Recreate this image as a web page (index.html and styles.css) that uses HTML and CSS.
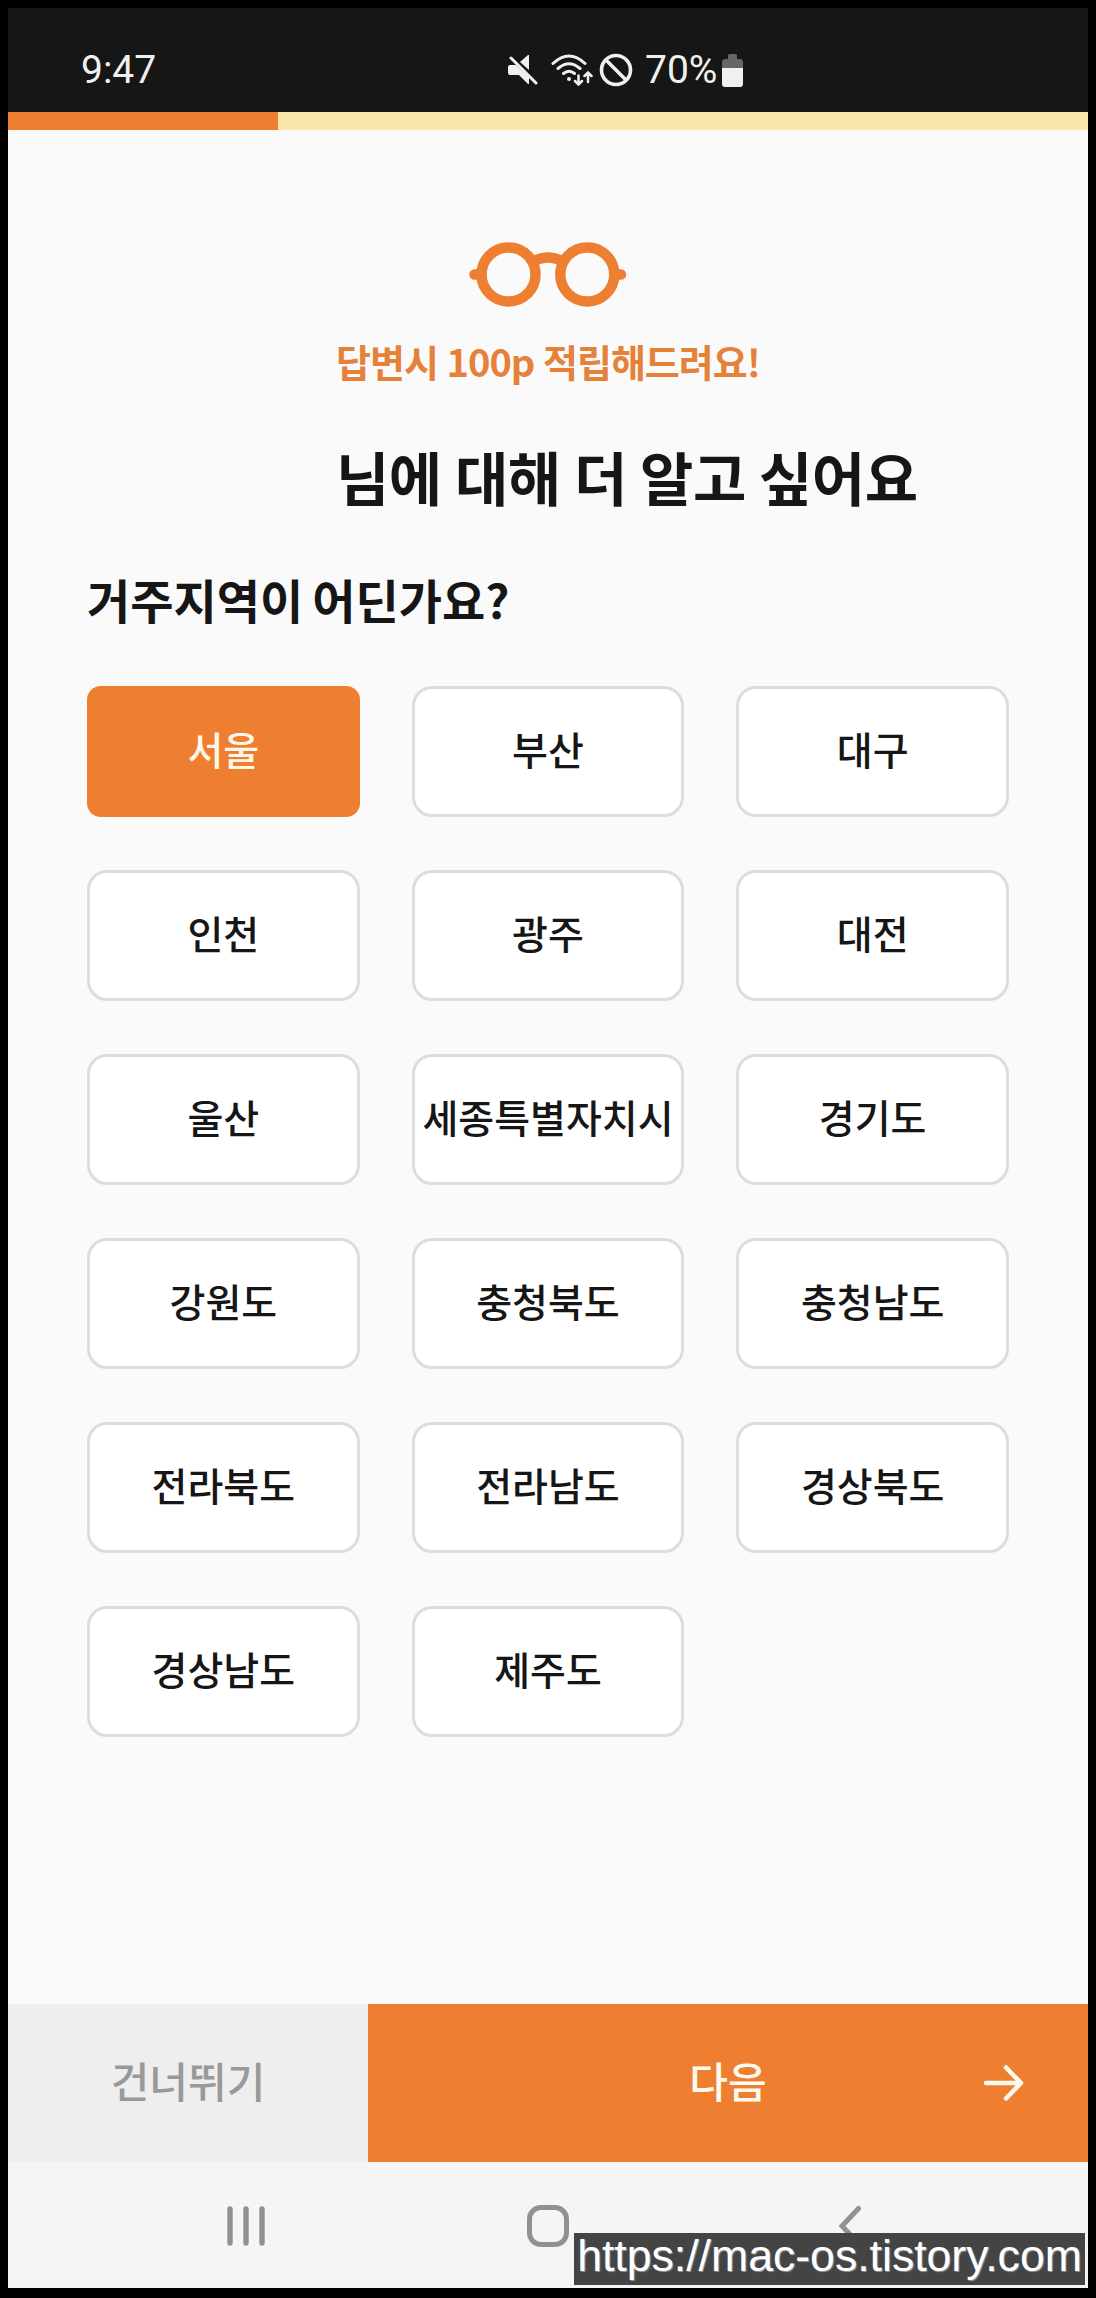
FILE: index.html
```html
<!DOCTYPE html>
<html lang="ko">
<head>
    <meta charset="UTF-8">
    <meta name="viewport" content="width=device-width, initial-scale=1.0">
    <title>거주지역 설문</title>
    <link rel="stylesheet" href="styles.css">
</head>
<body>
    <div class="phone">
        <div class="status-bar">
            <span class="time">9:47</span>
            <div class="status-icons">
                <svg class="icon-mute" width="30" height="30" viewBox="0 0 30 30">
                    <path d="M12 7l8-7h1v15z" fill="#f0f0ee"/>
                    <path d="M3 3l25 25" stroke="#161616" stroke-width="6"/>
                    <path d="M2 10h6l13 12v7h-1l-9-9H2q-2 0-2-2v-6q0-2 2-2z" fill="#f0f0ee"/>
                    <path d="M3 3l25 25" stroke="#f0f0ee" stroke-width="3" stroke-linecap="round"/>
                </svg>
                <svg class="icon-wifi" width="42" height="32" viewBox="0 0 42 32" fill="none" stroke="#f0f0ee" stroke-width="3" stroke-linecap="round">
                    <path d="M2 9.500Q18-5.500 34 9.500M7 14.500q11-9.500 22 0M12.500 19.500q5.500-4.500 11 0"/>
                    <circle cx="18" cy="25" r="2" fill="#f0f0ee" stroke="none"/>
                    <path d="M27.500 21.500v9M24 27l3.500 3.500 3.500-3.500M37 28v-9.500M33.500 22l3.500-3.500 3.500 3.500" stroke-width="2.500"/>
                </svg>
                <svg class="icon-block" width="34" height="34" viewBox="0 0 34 34" fill="none" stroke="#f0f0ee" stroke-width="3.600">
                    <circle cx="17" cy="17" r="14.500"/>
                    <path d="M6.500 6.500l21 21"/>
                </svg>
                <span class="battery-text">70%</span>
                <svg class="icon-battery" width="22" height="34" viewBox="0 0 22 34">
                    <path d="M6 1.500Q6 0 7.500 0h6Q15 0 15 1.500V5h3q3 0 3 3v7H0V8q0-3 3-3h3z" fill="#666"/>
                    <path d="M0 14h21v16q0 3-3 3H3q-3 0-3-3z" fill="#f0f0ee"/>
                </svg>
            </div>
        </div>
        <div class="progress"><div class="progress-fill"></div></div>

        <div class="content">
            <svg class="glasses" width="158" height="66" viewBox="0 0 158 66" fill="none" stroke="#ee7f31" stroke-width="10.500">
                <circle cx="39.500" cy="32.500" r="27"/>
                <circle cx="118.300" cy="32.500" r="27"/>
                <path d="M63 20q16-9 32 0"/>
                <path d="M5.500 32.500h7M145.500 32.500h6.500" stroke-linecap="round"/>
            </svg>
            <p class="reward">답변시 100p 적립해드려요!</p>
            <h1>님에 대해 더 알고 싶어요</h1>
            <h2>거주지역이 어딘가요?</h2>
            <div class="regions">
                <button class="region selected">서울</button>
                <button class="region">부산</button>
                <button class="region">대구</button>
                <button class="region">인천</button>
                <button class="region">광주</button>
                <button class="region">대전</button>
                <button class="region">울산</button>
                <button class="region">세종특별자치시</button>
                <button class="region">경기도</button>
                <button class="region">강원도</button>
                <button class="region">충청북도</button>
                <button class="region">충청남도</button>
                <button class="region">전라북도</button>
                <button class="region">전라남도</button>
                <button class="region">경상북도</button>
                <button class="region">경상남도</button>
                <button class="region">제주도</button>
            </div>
        </div>

        <div class="actions">
            <button class="skip">건너뛰기</button>
            <button class="next">
                <span></span>
                <span>다음</span>
                <svg class="arrow" width="42" height="38" viewBox="0 0 42 38" fill="none" stroke="#fffaf0" stroke-width="4.500" stroke-linecap="round" stroke-linejoin="round">
                    <path d="M3 19h35M23 3.500L38 19 23 34.500"/>
                </svg>
            </button>
        </div>

        <div class="nav-bar">
            <svg width="38" height="42" viewBox="0 0 38 42" stroke="#919191" stroke-width="5.400" stroke-linecap="round">
                <path d="M3 4v34M19 4v34M35 4v34"/>
            </svg>
            <svg width="42" height="42" viewBox="0 0 42 42" fill="none" stroke="#919191" stroke-width="5">
                <rect x="2.500" y="2.500" width="37" height="37" rx="11.500"/>
            </svg>
            <svg width="38" height="42" viewBox="0 0 38 42" fill="none" stroke="#919191" stroke-width="5" stroke-linecap="round">
                <path d="M27.500 3.500L11 21 27.500 38.500"/>
            </svg>
        </div>
        <div class="watermark">https://mac-os.tistory.com</div>
    </div>
</body>
</html>
```
FILE: styles.css
```css
* {
    box-sizing: border-box;
}
body {
    margin: 0;
    background-color: #000;
    color: #161616;
    font-family: "Noto Sans CJK KR", sans-serif;
}
.phone {
    position: relative;
    display: flex;
    flex-direction: column;
    width: 1096px;
    height: 2298px;
    border: 8px solid #000;
    border-bottom-width: 10px;
    background-color: #fafafa;
}

/* 상태바 */
.status-bar {
    display: flex;
    align-items: center;
    height: 104px;
    padding: 20px 73px 0;
    background-color: #161616;
    color: #f0f0ee;
    font-family: Roboto, sans-serif;
    font-size: 39px;
}
.time {
    width: 427px;
}
.status-icons {
    display: flex;
    align-items: center;
}
.icon-wifi {
    margin-left: 13px;
}
.icon-block {
    margin-left: 6px;
}
.battery-text {
    margin-left: 12px;
}
.icon-battery {
    margin: 2px 0 0 5px;
}
.progress {
    height: 18px;
    background-color: #fae6aa;
}
.progress-fill {
    width: 25%;
    height: 100%;
    background-color: #ee7f31;
}

/* 본문 */
.content {
    display: flex;
    flex: 1;
    flex-direction: column;
    padding: 112px 79px 0;
}
.glasses {
    align-self: center;
}
.reward {
    margin: 23px 0 0;
    color: #e58139;
    font-size: 38px;
    font-weight: bold;
    line-height: 60px;
    letter-spacing: -1px;
    word-spacing: -1px;
    text-align: center;
}
h1 {
    margin: 43px 0 0 249px;
    font-size: 58px;
    font-weight: bold;
    line-height: 84px;
    letter-spacing: -0.5px;
    word-spacing: -2.5px;
    white-space: nowrap;
}
h2 {
    margin: 46px 0 0;
    font-size: 47px;
    font-weight: bold;
    line-height: 70px;
    word-spacing: -4px;
}
.regions {
    display: grid;
    grid-template-columns: repeat(3, 1fr);
    grid-auto-rows: 131px;
    gap: 53px 52px;
    margin-top: 52px;
}
button {
    padding: 0;
    border: none;
    font-family: inherit;
    font-weight: 500;
    white-space: nowrap;
}
.region {
    padding-bottom: 7px;
    border: 3px solid #ddd;
    border-radius: 20px;
    background-color: #fff;
    color: #161616;
    font-size: 39px;
}
.region.selected {
    border: none;
    border-radius: 14px;
    background-color: #ee7f31;
    color: #fff8e8;
}

/* 하단 버튼 */
.actions {
    display: flex;
    height: 158px;
}
.skip {
    width: 360px;
    padding-bottom: 7px;
    background-color: #eee;
    color: #999;
    font-size: 42px;
}
.next {
    display: grid;
    grid-template-columns: 1fr auto 1fr;
    align-items: center;
    flex: 1;
    padding: 0 63px 7px;
    background-color: #ee7f31;
    color: #fffaf0;
    font-size: 42px;
}
.arrow {
    justify-self: end;
    margin-top: 7px;
}
.nav-bar {
    display: flex;
    justify-content: space-between;
    align-items: center;
    height: 126px;
    padding: 2px 219px 0;
    background-color: #f5f5f5;
}
.watermark {
    position: absolute;
    right: 3px;
    bottom: 3px;
    width: 511px;
    height: 52px;
    background-color: #444;
    color: #fff;
    font-family: "Liberation Sans", sans-serif;
    font-size: 44.6px;
    line-height: 45px;
    text-align: center;
    text-shadow: 1px 1px 1px #999;
}
```
